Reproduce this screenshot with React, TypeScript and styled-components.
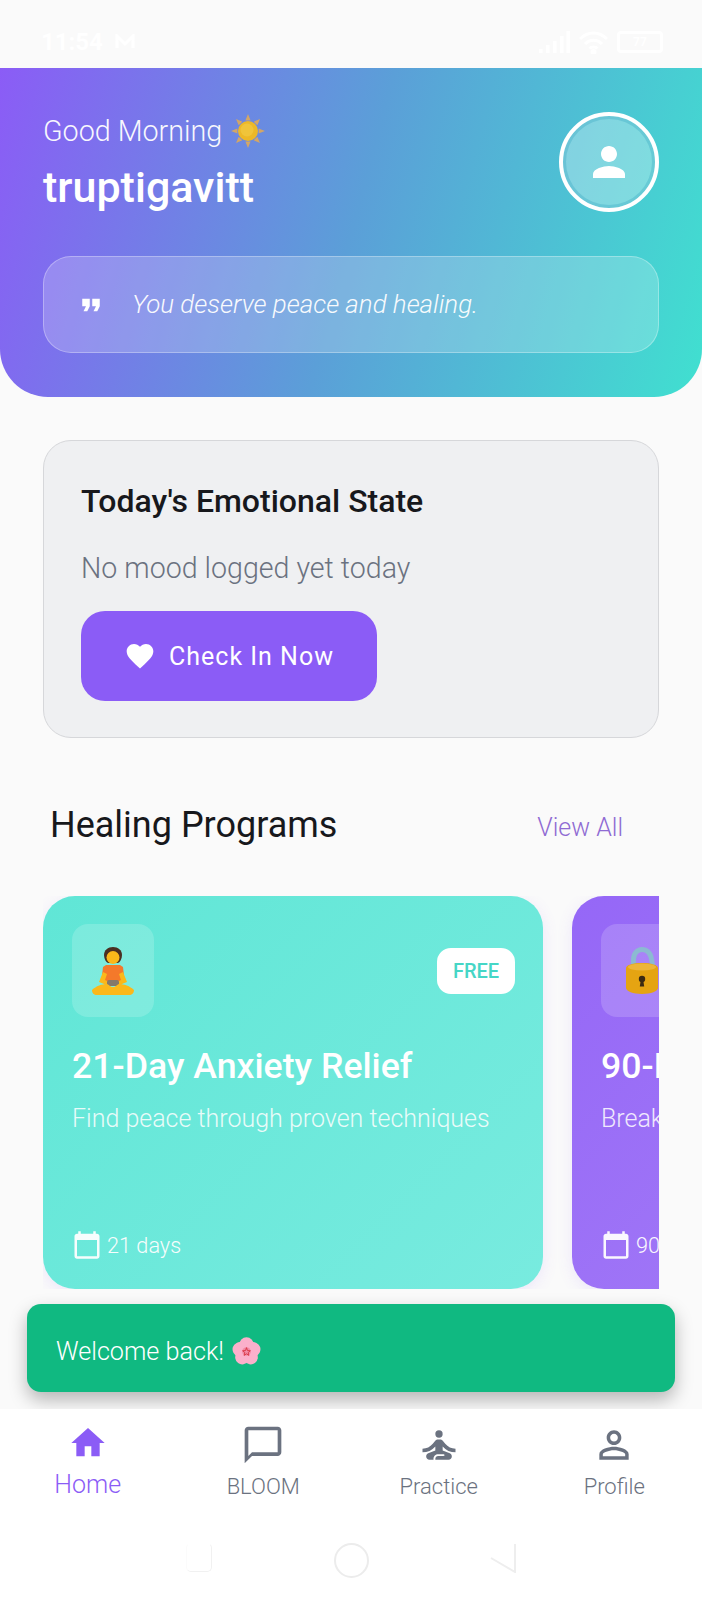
import React from 'react';
import styled, { createGlobalStyle } from 'styled-components';

const GlobalStyle = createGlobalStyle`
  html, body {
    margin: 0;
    padding: 0;
    background: #fafafa;
    font-family: Roboto, "Liberation Sans", sans-serif;
  }
  * { box-sizing: border-box; }
`;

const Screen = styled.div`
  position: relative;
  width: 702px;
  height: 1600px;
  display: flex;
  flex-direction: column;
  overflow: hidden;
  background: #fafafa;
`;

const StatusBar = styled.div`
  height: 68px;
  flex-shrink: 0;
  display: flex;
  align-items: center;
  justify-content: space-between;
  padding: 16px 39px 0 41px;
  color: #fff;
  font-size: 24px;
  font-weight: 700;
`;

const StatusLeft = styled.div`
  display: flex;
  align-items: center;
  gap: 12px;
`;

const StatusIcons = styled.div`
  display: flex;
  align-items: center;
  gap: 9px;
`;

const Battery = styled.div`
  width: 46px;
  height: 22px;
  display: flex;
  align-items: center;
  justify-content: center;
  border: 3px solid #fff;
  border-radius: 4px;
  font-size: 12px;
`;

const Hero = styled.header`
  height: 329px;
  flex-shrink: 0;
  padding: 44px 43px 0 43px;
  border-radius: 0 0 48px 48px;
  background: linear-gradient(105deg, #8b5cf6 0%, #5b9fd8 50%, #40e0d0 100%);
  color: #fff;
`;

const HeroTop = styled.div`
  display: flex;
  justify-content: space-between;
  align-items: flex-start;
`;

const Greeting = styled.div`
  display: flex;
  align-items: center;
  gap: 9px;
  height: 36px;
  margin-top: 1px;
  font-size: 28.7px;
  font-weight: 300;
  opacity: 0.95;
`;

const UserName = styled.div`
  margin-top: 14px;
  font-size: 43px;
  line-height: 48px;
  font-weight: 500;
`;

const Avatar = styled.div`
  width: 100px;
  height: 100px;
  border: 4px solid #fff;
  border-radius: 50%;
  display: flex;
  align-items: center;
  justify-content: center;
  background: rgba(255, 255, 255, 0.3);
  box-shadow: inset 0 0 0 3px rgba(60, 170, 195, 0.35);
`;

const QuoteBox = styled.div`
  margin-top: 44px;
  height: 97px;
  display: flex;
  align-items: center;
  gap: 26px;
  padding: 0 30px 0 32px;
  border: 1.5px solid rgba(255, 255, 255, 0.3);
  border-radius: 28px;
  background: rgba(255, 255, 255, 0.2);
`;

const QuoteText = styled.div`
  padding-bottom: 2px;
  font-size: 25.9px;
  font-style: italic;
  font-weight: 300;
  opacity: 0.95;
`;

const Content = styled.main`
  flex: 1;
  min-height: 0;
  padding: 43px 43px 0 43px;
`;

const MoodCard = styled.section`
  height: 298px;
  padding: 36px 37px;
  border: 1.5px solid #d6d7da;
  border-radius: 28px;
  background: #eff0f2;
`;

const MoodTitle = styled.h2`
  margin: 0;
  font-size: 32px;
  line-height: 48px;
  font-weight: 500;
  color: #17181c;
`;

const MoodHint = styled.p`
  margin: 26px 0 0;
  font-size: 28.6px;
  line-height: 34px;
  font-weight: 300;
  color: #6b7280;
`;

const CheckInButton = styled.button`
  margin-top: 26px;
  width: 296px;
  height: 90px;
  display: flex;
  align-items: center;
  justify-content: center;
  gap: 13px;
  border: 0;
  border-radius: 24px;
  background: #8b5cf6;
  color: #fff;
  font-family: inherit;
  font-size: 25px;
  font-weight: 400;
  letter-spacing: 1px;
`;

const SectionHead = styled.div`
  margin-top: 62px;
  height: 50px;
  display: flex;
  align-items: center;
  justify-content: space-between;
  padding: 0 36px 0 7px;
`;

const SectionTitle = styled.h2`
  margin: 0;
  font-size: 36px;
  font-weight: 400;
  color: #17181c;
`;

const ViewAll = styled.a`
  padding-top: 4px;
  font-size: 25px;
  font-weight: 300;
  color: #8f6ad3;
`;

const ProgramRow = styled.div`
  margin-top: 46px;
  height: 393px;
  display: flex;
  gap: 29px;
  overflow: hidden;
`;

const ProgramCard = styled.article<{ $tone: 'teal' | 'violet' }>`
  flex: 0 0 500px;
  display: flex;
  flex-direction: column;
  padding: 28px 28px 29px 29px;
  border-radius: 32px;
  color: #fff;
  box-shadow: 0 4px 16px rgba(139, 92, 246, 0.12);
  background: ${(p) =>
    p.$tone === 'teal'
      ? 'linear-gradient(135deg, #60e6d6 0%, #78ebdf 100%)'
      : 'linear-gradient(135deg, #9567f7 0%, #a780f6 100%)'};
`;

const CardTop = styled.div`
  display: flex;
  align-items: center;
  justify-content: space-between;
`;

const IconTile = styled.div`
  width: 82px;
  height: 93px;
  flex-shrink: 0;
  display: flex;
  align-items: center;
  justify-content: center;
  border-radius: 16px;
  background: rgba(255, 255, 255, 0.17);
`;

const FreeBadge = styled.span`
  width: 78px;
  height: 46px;
  display: flex;
  align-items: center;
  justify-content: center;
  border-radius: 14px;
  background: #fff;
  color: #45d6c6;
  font-size: 20px;
  font-weight: 500;
`;

const CardTitle = styled.h3`
  margin: 27px 0 0;
  font-size: 35.7px;
  line-height: 44px;
  font-weight: 500;
  white-space: nowrap;
`;

const CardText = styled.p`
  margin: 15px 0 0;
  font-size: 25px;
  line-height: 32px;
  font-weight: 300;
  white-space: nowrap;
  opacity: 0.85;
`;

const CardMeta = styled.div`
  margin-top: auto;
  display: flex;
  align-items: center;
  gap: 5px;
  font-size: 21.7px;
  font-weight: 300;
  opacity: 0.95;
`;

const Toast = styled.div`
  position: absolute;
  left: 27px;
  right: 27px;
  top: 1304px;
  height: 88px;
  display: flex;
  align-items: center;
  gap: 8px;
  padding: 7px 29px 0;
  border-radius: 14px;
  background: #10b981;
  color: #fff;
  font-size: 25.2px;
  font-weight: 300;
  box-shadow: 0 8px 18px rgba(0, 0, 0, 0.28);
`;

const BottomNav = styled.nav`
  position: relative;
  height: 191px;
  flex-shrink: 0;
  display: flex;
  flex-direction: column;
  background: #fff;
`;

const NavItems = styled.div`
  display: grid;
  grid-template-columns: repeat(4, 1fr);
  padding-top: 14px;
`;

const NavItem = styled.a<{ $active?: boolean }>`
  display: flex;
  flex-direction: column;
  align-items: center;
  gap: 7px;
  color: ${(p) => (p.$active ? '#8b5cf6' : '#6b7280')};
  font-size: ${(p) => (p.$active ? '25px' : '22px')};
  font-weight: 300;
`;

const SystemBar = styled.div`
  margin-top: auto;
  height: 57px;
  display: flex;
  align-items: flex-start;
  padding-left: 186px;
`;

const RecentKey = styled.div`
  width: 26px;
  height: 29px;
  border-radius: 5px;
  border: 1px solid #f1f1f1;
  border-top-color: #fff;
  border-left-color: #fbfbfb;
`;

const HomeKey = styled.div`
  width: 35px;
  height: 35px;
  margin-left: 122px;
  border-radius: 50%;
  border: 2px solid #ececec;
  box-shadow: inset 0 -3px 0 #fff;
`;

const BackKey = styled.svg`
  margin-left: 121px;
`;

const Icon = ({ d, size, color = 'currentColor' }: { d: string; size: number; color?: string }) => (
  <svg width={size} height={size} viewBox="0 0 24 24" fill={color} aria-hidden>
    <path d={d} />
  </svg>
);

const icons = {
  person: 'M12 12c2.21 0 4-1.79 4-4s-1.79-4-4-4-4 1.79-4 4 1.79 4 4 4zm0 2c-2.67 0-8 1.34-8 4v2h16v-2c0-2.66-5.33-4-8-4z',
  quote: 'M6 17h3l2-4V7H5v6h3zm8 0h3l2-4V7h-6v6h3z',
  heart: 'M12 21.35l-1.45-1.32C5.4 15.36 2 12.28 2 8.5 2 5.42 4.42 3 7.5 3c1.74 0 3.41.81 4.5 2.09C13.09 3.81 14.76 3 16.5 3 19.58 3 22 5.42 22 8.5c0 3.78-3.4 6.86-8.55 11.54L12 21.35z',
  calendar: 'M20 3h-1V1h-2v2H7V1H5v2H4c-1.1 0-2 .9-2 2v16c0 1.1.9 2 2 2h16c1.1 0 2-.9 2-2V5c0-1.1-.9-2-2-2zm0 18H4V8h16v13z',
  home: 'M10 20v-6h4v6h5v-8h3L12 3 2 12h3v8z',
  chat: 'M20 2H4c-1.1 0-2 .9-2 2v18l4-4h14c1.1 0 2-.9 2-2V4c0-1.1-.9-2-2-2zm0 14H6l-2 2V4h16v12z',
  profile: 'M12 5.9c1.16 0 2.1.94 2.1 2.1s-.94 2.1-2.1 2.1S9.9 9.16 9.9 8s.94-2.1 2.1-2.1m0 9c2.97 0 6.1 1.46 6.1 2.1v1.1H5.9V17c0-.64 3.13-2.1 6.1-2.1M12 4C9.79 4 8 5.79 8 8s1.79 4 4 4 4-1.79 4-4-1.79-4-4-4zm0 9c-2.67 0-8 1.34-8 4v3h16v-3c0-2.66-5.33-4-8-4z',
};

const PracticeIcon = ({ size }: { size: number }) => (
  <svg width={size} height={size} viewBox="0 0 24 24" fill="currentColor" aria-hidden>
    <circle cx="12" cy="6" r="2" />
    <path d="M21 16v-2c-2.24 0-4.16-.96-5.6-2.68l-1.34-1.6c-.38-.46-.94-.72-1.53-.72h-1.05c-.59 0-1.15.26-1.53.72l-1.34 1.6C7.16 13.04 5.24 14 3 14v2c2.77 0 5.19-1.17 7-3.25V15l-3.88 1.55c-.67.27-1.12.93-1.12 1.66C5 19.2 5.8 20 6.79 20H9v-.5c0-1.38 1.12-2.5 2.5-2.5h3c.28 0 .5.22.5.5s-.22.5-.5.5h-3c-.83 0-1.5.67-1.5 1.5v.5h7.21c.99 0 1.79-.8 1.79-1.79 0-.73-.45-1.39-1.12-1.66L14 15v-2.25c1.81 2.08 4.23 3.25 7 3.25z" />
  </svg>
);

// emoji drawn by hand, the sandbox has no colour emoji font
const SunEmoji = () => (
  <svg width="34" height="34" viewBox="0 0 34 34" aria-label="sun" role="img">
    <g fill="#d8a862">
      {[0, 45, 90, 135, 180, 225, 270, 315].map((a) => (
        <path key={a} d="M17 0l2.6 6.4h-5.2z" transform={`rotate(${a} 17 17)`} />
      ))}
    </g>
    <circle cx="17" cy="17" r="10" fill="#f4bb1e" />
    <circle cx="16" cy="16" r="6.5" fill="#f8c832" />
  </svg>
);

const MeditateEmoji = () => (
  <svg width="42" height="48" viewBox="0 0 42 48" aria-label="person in lotus position" role="img">
    <path d="M12 8c0-5 4-8 9-8s9 3 9 8c0 4-2 7-4 8H16c-2-1-4-4-4-8z" fill="#4a2f22" />
    <circle cx="21" cy="10.500" r="6.500" fill="#fbb81a" />
    <path d="M14 18h14l3 2 1 9-3 8H13l-3-8 1-9z" fill="#f4792a" />
    <path d="M11 25l-4 10 10 4v-4l-4-2 2-6zM31 25l4 10-10 4v-4l4-2-2-6z" fill="#fbb81a" />
    <rect x="15" y="33" width="12" height="6" rx="2" fill="#85796a" />
    <path d="M0 43c4-4 10-6 15-6 3 1 3 3 6 3s3-2 6-3c5 0 11 2 15 6 0 3-2 5-5 5H5c-3 0-5-2-5-5z" fill="#fbb81a" />
  </svg>
);

const LockEmoji = () => (
  <svg width="32" height="47" viewBox="0 0 32 47" aria-label="unlocked padlock" role="img">
    <path d="M5 20V13C5 5 10 0 16 0s11 4 12 12l1 6h-5l-1-6c-1-4-3-7-7-7s-6 4-6 8v7z" fill="#8cbad2" />
    <path d="M0 21c0-3 7-5 16-5s16 2 16 5v20c0 3-7 6-16 6S0 44 0 41z" fill="#e5a412" />
    <ellipse cx="16" cy="20" rx="14" ry="3.500" fill="#edb53a" />
    <circle cx="16" cy="32" r="3.200" fill="#3b2a12" />
    <path d="M14.800 33h2.400l1 6.500h-4.400z" fill="#3b2a12" />
  </svg>
);

const BlossomEmoji = () => (
  <svg width="29" height="29" viewBox="0 0 30 30" aria-label="cherry blossom" role="img">
    <g fill="#fbb0cb">
      {[0, 72, 144, 216, 288].map((a) => (
        <ellipse key={a} cx="15" cy="8" rx="7.500" ry="7.800" transform={`rotate(${a} 15 15)`} />
      ))}
    </g>
    <circle cx="15" cy="15" r="4.500" fill="#f28aa5" />
    <path d="M15 11l1 3 3 .2-2.300 1.900.8 3-2.500-1.700-2.500 1.700.8-3-2.300-1.900 3-.2z" fill="none" stroke="#d8323f" strokeWidth="0.9" />
  </svg>
);

const programs = [
  {
    tone: 'teal' as const,
    emoji: <MeditateEmoji />,
    title: '21-Day Anxiety Relief',
    text: 'Find peace through proven techniques',
    days: '21 days',
    free: true,
  },
  {
    tone: 'violet' as const,
    emoji: <LockEmoji />,
    title: '90-Day Breakthrough',
    text: 'Break free from old patterns',
    days: '90 days',
    free: false,
  },
];

const tabs = [
  { label: 'Home', active: true, icon: <Icon d={icons.home} size={40} /> },
  { label: 'BLOOM', icon: <Icon d={icons.chat} size={44} /> },
  { label: 'Practice', icon: <PracticeIcon size={44} /> },
  { label: 'Profile', icon: <Icon d={icons.profile} size={44} /> },
];

export default function App() {
  return (
    <Screen>
      <GlobalStyle />
      <StatusBar>
        <StatusLeft>
          <span>11:54</span>
          <svg width="20" height="16" viewBox="0 0 20 16" fill="none" stroke="#fff" strokeWidth="3" aria-hidden>
            <path d="M2 14V2l8 8 8-8v12" />
          </svg>
        </StatusLeft>
        <StatusIcons>
          <svg width="31" height="22" viewBox="0 0 31 22" fill="#fff" aria-hidden>
            <rect x="0" y="18" width="3.500" height="4" />
            <rect x="7" y="14" width="3.500" height="8" />
            <rect x="14" y="10" width="3.500" height="12" />
            <rect x="21" y="5" width="3.500" height="17" />
            <rect x="27.500" y="0" width="3.500" height="22" />
          </svg>
          <svg width="29" height="23" viewBox="0 0 29 23" fill="none" stroke="#fff" strokeWidth="3" aria-hidden>
            <path d="M1 8c8-8 19-8 27 0M6 13c5-5 12-5 17 0M10.500 17.500c2-2 6-2 8 0" />
            <circle cx="14.500" cy="21" r="1.500" fill="#fff" />
          </svg>
          <Battery>77</Battery>
        </StatusIcons>
      </StatusBar>

      <Hero>
        <HeroTop>
          <div>
            <Greeting>
              Good Morning <SunEmoji />
            </Greeting>
            <UserName>truptigavitt</UserName>
          </div>
          <Avatar>
            <Icon d={icons.person} size={48} color="#fff" />
          </Avatar>
        </HeroTop>
        <QuoteBox>
          <Icon d={icons.quote} size={30} color="#fff" />
          <QuoteText>You deserve peace and healing.</QuoteText>
        </QuoteBox>
      </Hero>

      <Content>
        <MoodCard>
          <MoodTitle>Today's Emotional State</MoodTitle>
          <MoodHint>No mood logged yet today</MoodHint>
          <CheckInButton>
            <Icon d={icons.heart} size={32} color="#fff" />
            Check In Now
          </CheckInButton>
        </MoodCard>

        <SectionHead>
          <SectionTitle>Healing Programs</SectionTitle>
          <ViewAll>View All</ViewAll>
        </SectionHead>

        <ProgramRow>
          {programs.map((p) => (
            <ProgramCard key={p.title} $tone={p.tone}>
              <CardTop>
                <IconTile>{p.emoji}</IconTile>
                {p.free && <FreeBadge>FREE</FreeBadge>}
              </CardTop>
              <CardTitle>{p.title}</CardTitle>
              <CardText>{p.text}</CardText>
              <CardMeta>
                <Icon d={icons.calendar} size={30} />
                {p.days}
              </CardMeta>
            </ProgramCard>
          ))}
        </ProgramRow>
      </Content>

      <Toast>
        Welcome back! <BlossomEmoji />
      </Toast>

      <BottomNav>
        <NavItems>
          {tabs.map((t) => (
            <NavItem key={t.label} $active={t.active}>
              {t.icon}
              {t.label}
            </NavItem>
          ))}
        </NavItems>
        <SystemBar>
          <RecentKey />
          <HomeKey />
          <BackKey width="26" height="30" viewBox="0 0 26 30" fill="none" stroke="#eeeeee" strokeWidth="2" aria-hidden>
            <path d="M1 15l24 14V1" />
          </BackKey>
        </SystemBar>
      </BottomNav>
    </Screen>
  );
}
